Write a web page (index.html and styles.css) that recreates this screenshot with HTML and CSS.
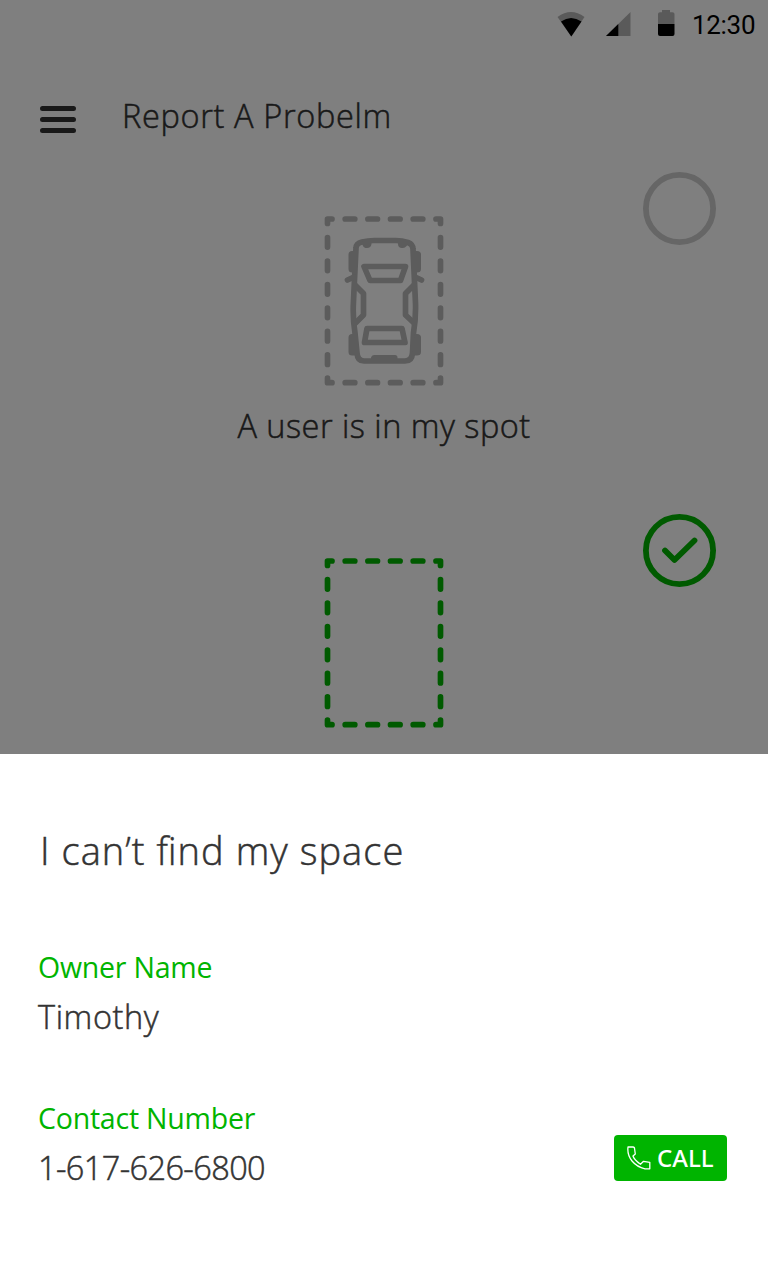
FILE: index.html
```html
<!DOCTYPE html>
<html lang="en">
<head>
<meta charset="utf-8">
<title>Report A Probelm</title>
<link rel="stylesheet" href="styles.css">
</head>
<body>
<div class="screen">
  <main class="page">
    <div class="status">
      <svg class="status-icons" width="130" height="40" viewBox="550 5 130 40">
        <path d="M557.500 17Q571 7 584.500 17L571.300 36.500Z" fill="#b5b5b5"/>
        <path d="M561 21.500Q571 14.500 581.500 21.500L571.300 36.500Z" fill="#000"/>
        <path d="M630.500 12V36H606Z" fill="#b5b5b5"/>
        <path d="M618.300 24V36H606Z" fill="#000"/>
        <path d="M658 24V14Q658 12.300 660 12.300H662V10H670V12.300H672.500Q674.500 12.300 674.500 14V24Z" fill="#b5b5b5"/>
        <path d="M658 24H674.500V34Q674.500 36 672.500 36H660Q658 36 658 34Z" fill="#000"/>
      </svg>
      <span class="time">12:30</span>
    </div>
    <header class="bar">
      <svg class="menu" width="36" height="28" viewBox="0 0 36 28">
        <path d="M2.500 2.500H33.500M2.500 13.500H33.500M2.500 24.500H33.500"/>
      </svg>
      <h1 class="title">Report A Probelm</h1>
    </header>
    <section class="option">
      <svg class="spot" width="140" height="190" viewBox="0 0 140 190">
        <g id="outline">
          <path d="M13.500 17.500V13H18M122 13H126.500V17.500M126.500 172.200V176.700H122M18 176.700H13.500V172.200"/>
          <path d="M31.200 13h9.600M53.900 13h9.600M76.500 13h9.600M99.200 13h9.600M31.200 176.700h9.600M53.900 176.700h9.600M76.500 176.700h9.600M99.200 176.700h9.600"/>
          <path d="M13.500 31.500v9.600M13.500 55v9.600M13.500 78.500v9.600M13.500 102v9.600M13.500 125.400v9.600M13.500 148.900v9.600M126.500 31.500v9.600M126.500 55v9.600M126.500 78.500v9.600M126.500 102v9.600M126.500 125.400v9.600M126.500 148.900v9.600"/>
        </g>
        <path d="M42 42Q42 37.500 48 36Q54 34.500 60 34.500H82Q88 34.500 94 36.500Q99 38.500 99 43L101.500 97Q102 112 99.500 127L98.500 147Q98 155 91 155H50Q43.500 155 43 147L41 127Q38.500 112 39.500 95Z"/>
        <path d="M50 60.500H91.500L86.500 74.500H56ZM53 122.500H88L91 136.500H50.500Z"/>
        <path d="M41 79L49.500 87.500V109L41.500 117M100 79L91.500 87.500V109L100 117M33.500 74L40 71M107.500 74L101 71"/>
        <path class="fill" d="M41 45H38Q34.500 45 34.500 48.500V63Q34.500 66.500 38 66.500H41ZM100 45H103Q107 45 107 48.500V63Q107 66.500 103 66.500H100ZM101 128H103Q107 128 107 131.500V146Q107 149.500 103 149.500H98ZM38 128Q34.500 128 34.500 131.500V146Q34.500 149.500 38 149.500H43V128ZM48 35H57.500V38Q57 42 53 42H51.500Q48 41 48 35ZM84 35H95Q93 42 89 42H88Q84 42 84 38ZM57 155V151.500Q57.500 149 60 149H81Q83.500 149 83.500 151.500V155Z"/>
      </svg>
      <svg class="check" width="74" height="74" viewBox="0 0 74 74"><circle cx="36.500" cy="36.500" r="33.600"/></svg>
      <p class="label">A user is in my spot</p>
    </section>
    <section class="option selected">
      <svg class="spot" width="140" height="190" viewBox="0 0 140 190"><use href="#outline"/></svg>
      <svg class="check" width="74" height="74" viewBox="0 0 74 74"><circle cx="36.500" cy="36.500" r="33.600"/><path d="M22 36.500L31.500 46L51.500 26.500"/></svg>
    </section>
  </main>
  <div class="scrim"></div>
  <section class="sheet">
    <h2 class="heading">I can’t <span class="lig">fi</span>nd my space</h2>
    <div class="field">
      <h3 class="name">Owner Name</h3>
      <p class="value">Timothy</p>
    </div>
    <div class="field row">
      <div>
        <h3 class="name">Contact Number</h3>
        <p class="value number">1-617-626-6800</p>
      </div>
      <button class="call">
        <svg width="24" height="24" viewBox="0 0 24 24"><path d="M1 1H6Q7.600 1 7.600 3L8.300 8L6 10Q7 13.500 13.500 18.300L16.500 15.300L22.800 16.300V22.800H18Q10 21 5 15Q0 9 1 1Z"/></svg>
        <span class="call-text">CALL</span>
      </button>
    </div>
  </section>
</div>
</body>
</html>
```

FILE: styles.css
```css
* { box-sizing: border-box; margin: 0; padding: 0; }
body { font-family: "Open Sans", sans-serif; font-weight: 300; color: #333; background: #fff; }
.screen { position: relative; width: 768px; height: 1280px; overflow: hidden; display: flex; flex-direction: column; }
.page { height: 754px; overflow: hidden; }
.scrim { position: absolute; inset: 0 0 526px; background: rgba(0, 0, 0, .5); }
.status { height: 50px; padding: 5px 12px 0 0; display: flex; justify-content: flex-end; gap: 12px; color: #000; }
.time { width: 64px; font: 400 26px/40px Roboto, sans-serif; white-space: nowrap; letter-spacing: -.3px; }
.bar { height: 110px; padding: 42px 40px 0; display: flex; gap: 46px; }
.menu { margin-top: 13.5px; fill: none; stroke: #333; stroke-width: 5; stroke-linecap: round; }
.title, .label, .heading, .value { -webkit-text-stroke: .5px currentColor; }
.title { font-size: 32.5px; line-height: 48px; font-weight: 300; white-space: nowrap; letter-spacing: .65px; }
.option { position: relative; height: 342px; padding-top: 46px; display: flex; flex-direction: column; align-items: center; }
.spot { flex: none; fill: none; stroke: #b8b8b8; stroke-width: 5.7; stroke-linecap: round; stroke-linejoin: round; }
.spot .fill { fill: #b8b8b8; stroke: none; }
.check { position: absolute; top: 12px; left: 643px; fill: none; stroke: #ccc; stroke-width: 5.8; stroke-linecap: round; stroke-linejoin: round; }
.selected .spot, .selected .check { stroke: #00b400; }
.label { margin-top: 6px; font-size: 32.5px; line-height: 48px; white-space: nowrap; letter-spacing: .48px; }
.sheet { height: 526px; padding: 66px 41px 0 38px; background: #fff; }
.heading { height: 120px; padding-left: 2px; font-size: 38px; line-height: 60px; font-weight: 300; white-space: nowrap; letter-spacing: 1.05px; }
.lig { letter-spacing: 0; margin-right: 1px; }
.field { height: 151px; }
.name { height: 52px; font-size: 28.5px; line-height: 54px; font-weight: 400; color: #00b400; white-space: nowrap; letter-spacing: -.22px; }
.value { font-size: 32.5px; line-height: 49px; white-space: nowrap; letter-spacing: .6px; }
.number { letter-spacing: -.6px; }
.row { display: flex; justify-content: space-between; }
.call { margin-top: 44px; width: 113px; height: 46px; padding: 0 13px; display: flex; align-items: center; gap: 6px; border: 0; border-radius: 4px; background: #00b400; color: #fff; }
.call svg { flex: none; fill: none; stroke: #fff; stroke-width: 1.3; stroke-linejoin: round; }
.call-text { font: 500 24px/46px "Noto Sans", sans-serif; }
```
